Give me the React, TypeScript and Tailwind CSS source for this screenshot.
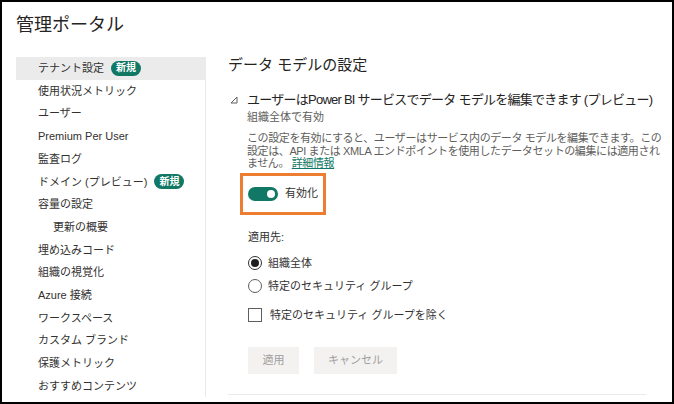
import React from "react";

const navItems: { label: string; isNew?: boolean; sub?: boolean; active?: boolean }[] = [
  { label: "テナント設定", isNew: true, active: true },
  { label: "使用状況メトリック" },
  { label: "ユーザー" },
  { label: "Premium Per User" },
  { label: "監査ログ" },
  { label: "ドメイン (プレビュー)", isNew: true },
  { label: "容量の設定" },
  { label: "更新の概要", sub: true },
  { label: "埋め込みコード" },
  { label: "組織の視覚化" },
  { label: "Azure 接続" },
  { label: "ワークスペース" },
  { label: "カスタム ブランド" },
  { label: "保護メトリック" },
  { label: "おすすめコンテンツ" },
];

const NewBadge = () => (
  <span className="ml-[7px] inline-flex h-[15px] items-center rounded-full bg-[#117865] px-[5px] text-[10px] font-bold leading-none text-white">
    新規
  </span>
);

const Radio = ({ checked, label }: { checked?: boolean; label: string }) => (
  <div className="flex h-[23px] items-center">
    <span
      className={
        checked
          ? "flex h-[14px] w-[14px] items-center justify-center rounded-full border border-[#323130]"
          : "flex h-[14px] w-[14px] items-center justify-center rounded-full border border-[#605e5c]"
      }
    >
      {checked && <span className="h-[8px] w-[8px] rounded-full bg-[#201f1e]" />}
    </span>
    <span className="ml-[6px]">{label}</span>
  </div>
);

export default function App() {
  return (
    <div
      className="h-[404px] w-[674px] overflow-hidden border-2 border-black bg-white text-[#323130]"
      style={{ fontFamily: '"Liberation Sans", "Noto Sans CJK JP", sans-serif' }}
    >
      <div className="pl-[14px] pt-[10px] text-[18px] leading-[26px] text-[#252423]">管理ポータル</div>

      <div className="mt-[19px] flex">
        <nav className="ml-[14px] w-[190px] shrink-0 border-r border-[#edebe9] text-[11px]">
          {navItems.map((item) => (
            <div
              key={item.label}
              className={clsx(
                "flex h-[22.7px] items-center",
                item.sub ? "pl-[37px]" : "pl-[22px]",
                item.active && "bg-[#ebebeb]"
              )}
            >
              <span>{item.label}</span>
              {item.isNew && <NewBadge />}
            </div>
          ))}
        </nav>

        <main className="min-w-0 flex-1 pl-[22px] pr-[26px]">
          <h2 className="text-[15px] leading-[16px] text-[#252423]">データ モデルの設定</h2>

          <div className="mt-[18px] flex h-[18px] items-center">
            <svg width="8" height="8" viewBox="0 0 8 8" className="ml-[2px] mr-[9px] shrink-0">
              <path d="M7 1 L7 7 L1 7 Z" fill="none" stroke="#605e5c" strokeWidth="1" />
            </svg>
            <span className="whitespace-nowrap text-[13px] tracking-[-0.75px] text-[#252423]">
              ユーザーはPower BI サービスでデータ モデルを編集できます (プレビュー)
            </span>
          </div>

          <div className="pl-[19px]">
            <div className="text-[11px] leading-[16px] text-[#605e5c]">組織全体で有効</div>
            <p className="mt-[7px] whitespace-nowrap text-[11px] leading-[12.5px] tracking-[-0.4px] text-[#605e5c]">
              この設定を有効にすると、ユーザーはサービス内のデータ モデルを編集できます。この
              <br />
              設定は、API または XMLA エンドポイントを使用したデータセットの編集には適用され
              <br />
              ません。 <a className="text-[#117865] underline">詳細情報</a>
            </p>

            <div className="mt-[3px] -ml-[7px] flex h-[42px] w-[86px] items-center border-[3px] border-[#ed7d31] pl-[5px]">
              <span className="flex h-[14px] w-[30px] items-center justify-end rounded-full bg-[#117865] pr-[3px]">
                <span className="h-[8px] w-[8px] rounded-full bg-white" />
              </span>
              <span className="ml-[7px] text-[11px]">有効化</span>
            </div>

            <div className="mt-[14px] pl-[1px] text-[11px]">
              <div className="leading-[16px]">適用先:</div>
              <div className="mt-[7px]">
                <Radio checked label="組織全体" />
                <Radio label="特定のセキュリティ グループ" />
              </div>
              <div className="mt-[6px] flex h-[23px] items-center">
                <span className="h-[14px] w-[14px] border border-[#605e5c]" />
                <span className="ml-[8px]">特定のセキュリティ グループを除く</span>
              </div>
              <div className="mt-[20px] flex gap-[15px]">
                <button className="h-[27px] w-[51px] bg-[#f3f2f1] text-[#a19f9d]">適用</button>
                <button className="h-[27px] w-[83px] bg-[#f3f2f1] text-[#a19f9d]">キャンセル</button>
              </div>
            </div>
          </div>
          <div className="mt-[20px] h-px bg-[#edebe9]" />
        </main>
      </div>
    </div>
  );
}

function clsx(...args: (string | false | undefined)[]) {
  return args.filter(Boolean).join(" ");
}
